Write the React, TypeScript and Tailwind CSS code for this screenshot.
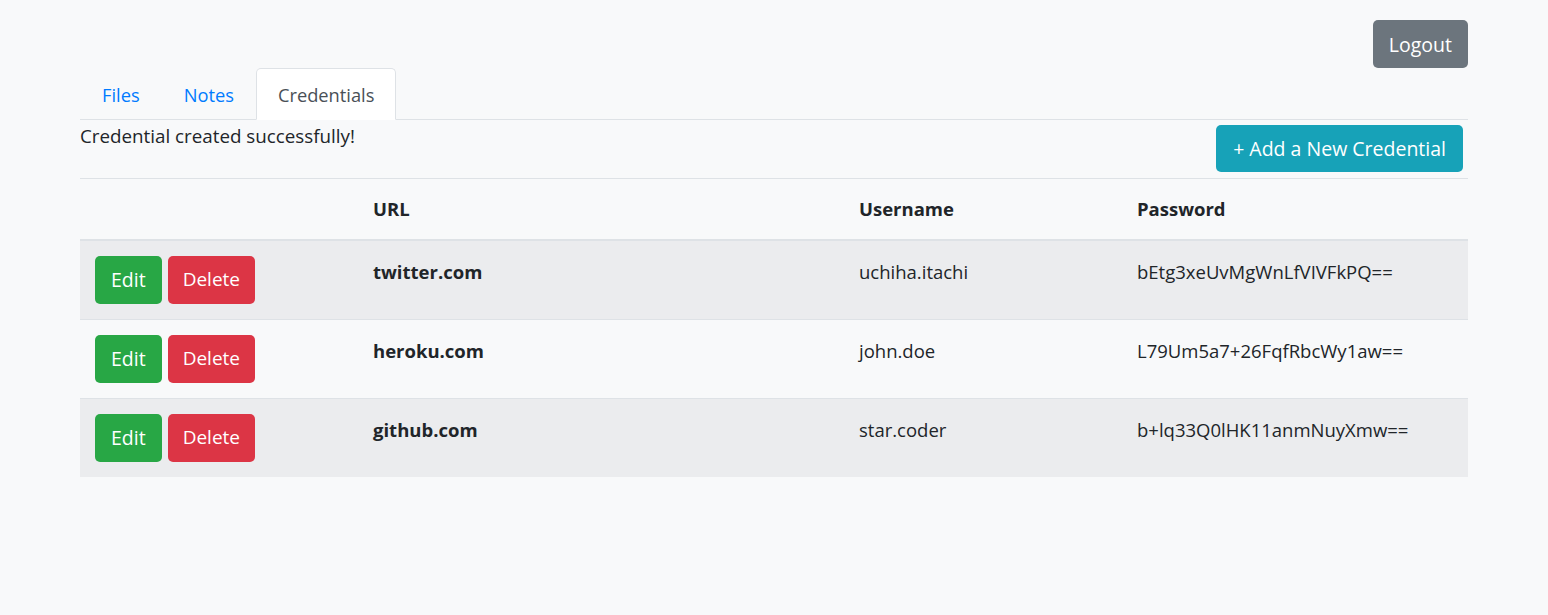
import React from "react";

interface Credential {
  id: string;
  url: string;
  username: string;
  password: string;
}

const credentials: Credential[] = [
  { id: "c1", url: "twitter.com", username: "uchiha.itachi", password: "bEtg3xeUvMgWnLfVIVFkPQ==" },
  { id: "c2", url: "heroku.com", username: "john.doe", password: "L79Um5a7+26FqfRbcWy1aw==" },
  { id: "c3", url: "github.com", username: "star.coder", password: "b+lq33Q0lHK11anmNuyXmw==" },
];

const tabs = ["Files", "Notes", "Credentials"];

export default function App() {
  const font = { fontFamily: "'Open Sans', 'Noto Sans', sans-serif" };
  return (
    <div className="min-h-[615px] bg-[#f8f9fa] text-[#212529] px-[80px] pt-[20px]" style={font}>
      <div className="flex justify-end">
        <button className="h-[48px] px-4 pt-px rounded-[5px] bg-[#6c757d] text-white text-[19.5px]">Logout</button>
      </div>

      <div className="flex border-b border-[#dee2e6]">
        {tabs.map((t) => (
          <div
            key={t}
            className={`h-[52px] -mb-px flex items-center pt-px px-[21px] text-[18.3px] rounded-t-[5px] border ${
              t === "Credentials"
                ? "bg-white border-[#dee2e6] border-b-white text-[#495057]"
                : "border-transparent text-[#007bff]"
            }`}
          >
            {t}
          </div>
        ))}
      </div>

      <div className="flex items-start justify-between h-[58px]">
        <div className="mt-[3px] text-[18.8px] leading-[27px]">Credential created successfully!</div>
        <button className="mt-[5px] mr-[5px] h-[47px] px-[17px] pt-px rounded-[5px] bg-[#17a2b8] text-white text-[19.5px]">
          + Add a New Credential
        </button>
      </div>

      <table className="w-full border-collapse text-[18.5px]">
        <thead>
          <tr className="border-t border-[#dee2e6] border-b-2">
            <th className="w-[278px]"></th>
            <th className="w-[486px] text-left font-bold px-[15px] h-[61px]">URL</th>
            <th className="w-[278px] text-left font-bold px-[15px]">Username</th>
            <th className="text-left font-bold px-[15px]">Password</th>
          </tr>
        </thead>
        <tbody>
          {credentials.map((c, i) => (
            <tr key={c.id} className={`border-t border-[#dee2e6] ${i % 2 === 0 ? "bg-[#ebecee]" : ""}`}>
              <td className="px-[15px] pt-[15px] pb-[15px] align-top">
                <div className="flex gap-[6px]">
                  <button className="h-[48px] px-[16px] rounded-[5px] bg-[#28a745] text-white text-[19.5px]">Edit</button>
                  <button className="h-[48px] px-[15px] rounded-[5px] bg-[#dc3545] text-white text-[19px]">Delete</button>
                </div>
              </td>
              <td className="px-[15px] pt-[17px] align-top font-bold">{c.url}</td>
              <td className="px-[15px] pt-[17px] align-top">{c.username}</td>
              <td className="px-[15px] pt-[17px] align-top">{c.password}</td>
            </tr>
          ))}
        </tbody>
      </table>
    </div>
  );
}
